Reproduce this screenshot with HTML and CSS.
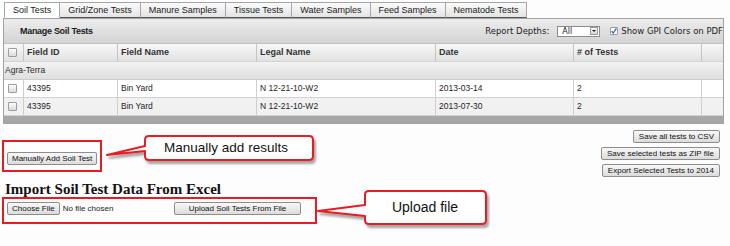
FILE: index.html
```html
<!DOCTYPE html>
<html>
	<head>
		<meta charset="UTF-8">
		<title>Manage Soil Tests</title>
		<link rel="stylesheet" href="styles.css">
	</head>
	<body>
		<ul class="tabs">
			<li class="tab on">Soil Tests</li>
			<li class="tab">Grid/Zone Tests</li>
			<li class="tab">Manure Samples</li>
			<li class="tab">Tissue Tests</li>
			<li class="tab">Water Samples</li>
			<li class="tab">Feed Samples</li>
			<li class="tab">Nematode Tests</li>
		</ul>
		<div class="panel">
			<div class="panel-head">
				<span class="panel-title">Manage Soil Tests</span>
				<div class="head-tools">
					<span class="depth-label">Report Depths:</span>
					<span class="select"><span class="select-val">All</span><i class="select-arrow"></i></span>
					<span class="chk chk-gpi"><svg width="6" height="6" viewBox="0 0 6 6"><polyline points="0.6,3.2 2.2,5 5.4,0.4" fill="none" stroke="#2d5fb3" stroke-width="1.2"/></svg></span>
					<span class="gpi">Show GPI Colors on PDF</span>
				</div>
			</div>
			<div class="grid">
				<div class="row row-head">
					<div class="cell"><span class="chk"></span></div>
					<div class="cell">Field ID</div>
					<div class="cell">Field Name</div>
					<div class="cell">Legal Name</div>
					<div class="cell">Date</div>
					<div class="cell"># of Tests</div>
					<div class="cell"></div>
				</div>
				<div class="row-group">Agra-Terra</div>
				<div class="row">
					<div class="cell"><span class="chk"></span></div>
					<div class="cell">43395</div>
					<div class="cell">Bin Yard</div>
					<div class="cell">N 12-21-10-W2</div>
					<div class="cell">2013-03-14</div>
					<div class="cell">2</div>
					<div class="cell"></div>
				</div>
				<div class="row row-alt">
					<div class="cell"><span class="chk"></span></div>
					<div class="cell">43395</div>
					<div class="cell">Bin Yard</div>
					<div class="cell">N 12-21-10-W2</div>
					<div class="cell">2013-07-30</div>
					<div class="cell">2</div>
					<div class="cell"></div>
				</div>
			</div>
			<div class="panel-foot"></div>
		</div>
		<div class="actions">
			<div class="mark mark-add">
				<button class="btn btn-add">Manually Add Soil Test</button>
			</div>
			<div class="exports">
				<button class="btn">Save all tests to CSV</button>
				<button class="btn">Save selected tests as ZIP file</button>
				<button class="btn">Export Selected Tests to 2014</button>
			</div>
		</div>
		<h2 class="import-title">Import Soil Test Data From Excel</h2>
		<div class="mark mark-upload">
			<button class="btn btn-file">Choose File</button>
			<span class="no-file">No file chosen</span>
			<button class="btn btn-upload">Upload Soil Tests From File</button>
		</div>
		<!-- callouts drawn over the screenshot -->
		<svg class="notes" width="730" height="246" viewBox="0 0 730 246">
			<defs>
				<filter id="shadow" x="-20%" y="-30%" width="140%" height="170%">
					<feDropShadow dx="2" dy="3" stdDeviation="1.2" flood-color="#000" flood-opacity=".35"/>
				</filter>
			</defs>
			<path class="note" filter="url(#shadow)" d="M149 136H309Q313 136 313 140V156Q313 160 309 160H149Q145 160 145 156V151L107 155L145 146V140Q145 136 149 136Z"/>
			<text class="note-text" x="226" y="152">Manually add results</text>
			<path class="note" filter="url(#shadow)" d="M369 191H482Q486 191 486 195V220Q486 224 482 224H369Q365 224 365 220V216L318 211L365 205V195Q365 191 369 191Z"/>
			<text class="note-text note-big" x="425" y="212">Upload file</text>
		</svg>
	</body>
</html>
```

FILE: styles.css
```css
*{margin:0;padding:0}
ul,li{list-style:none;}
body{position:relative;width:730px;height:246px;overflow:hidden;background:#fdfdfd;font-family:"Liberation Sans",Arial,sans-serif;color:#222;}

.tabs{display:flex;height:16px;padding:2px 0 0 4px;}
.tab{font-size:9px;line-height:14px;padding:0 8px;border:1px solid #a6a6a6;border-left:none;border-bottom-color:#555;background:linear-gradient(#fbfbfb,#e4e4e4);color:#1a1a1a;}
.tab:first-child{border-left:1px solid #a6a6a6;}
.tab.on{background:#fff;border-bottom-color:#fff;}

.panel{margin-left:3px;width:719px;border:1px solid #a3a3a3;}
.panel-head{display:flex;align-items:center;justify-content:space-between;height:25px;box-sizing:border-box;padding-left:16px;background:linear-gradient(#ededed,#d3d3d3);border-bottom:1px solid #c2c2c2;}
.panel-title{font-size:9px;font-weight:bold;letter-spacing:-.3px;color:#1a1a1a;}
.head-tools{display:flex;align-items:center;font-family:"DejaVu Sans",Verdana,sans-serif;font-size:8.5px;color:#222;}
.depth-label{margin-right:8px;}
.select{display:flex;align-items:center;width:43px;height:11px;box-sizing:border-box;border:1px solid #8c8c8c;background:#fff;}
.select-val{flex:1;padding-left:4px;font-size:8px;line-height:9px;}
.select-arrow{display:flex;align-items:center;justify-content:center;width:8px;height:8px;margin-right:1px;box-sizing:border-box;border:1px solid #9a9a9a;background:linear-gradient(#f6f6f6,#d6d6d6);}
.select-arrow::after{content:"";border-left:2px solid transparent;border-right:2px solid transparent;border-top:2px solid #222;}

.chk{display:inline-block;width:9px;height:9px;box-sizing:border-box;border:1px solid #9c9c9c;border-radius:1px;background:linear-gradient(#fdfdfd,#dadada);}
.chk-gpi{display:flex;align-items:center;justify-content:center;width:8px;height:8px;margin:0 3px 0 10px;background:#fff;}

.row{display:grid;grid-template-columns:19px 94px 139px 179px 138px 128px 22px;height:18px;box-sizing:border-box;border-bottom:1px solid #d2d2d2;background:#fff;}
.row-alt{background:#f1f1f1;}
.cell{border-left:1px solid #cfcfcf;padding-left:3px;font-size:8.5px;line-height:17px;white-space:nowrap;overflow:hidden;color:#1e1e1e;}
.cell:first-child{display:flex;align-items:center;border-left:none;padding-left:4px;}
.row-head{background:linear-gradient(#f8f8f8,#e2e2e2);}
.row-head .cell{font-size:9px;font-weight:bold;color:#333;border-left-color:#c4c4c4;}
.row-group{height:18px;box-sizing:border-box;padding-left:1px;font-size:8.5px;line-height:17px;color:#2a2a2a;background:linear-gradient(#f3f3f3,#dfdfdf);border-bottom:1px solid #cdcdcd;}
.panel-foot{height:7px;background:#a7a7a7;}

.btn{display:inline-block;height:13px;box-sizing:border-box;padding:0 5px;border:1px solid #8d8d8d;border-radius:2px;background:linear-gradient(#f8f8f8,#dcdcdc);font:8px/11px "Liberation Sans",Arial,sans-serif;color:#111;white-space:nowrap;}
.btn-add{padding:0 4px;}
.btn-file{padding:0 4px;}

.actions{display:flex;justify-content:space-between;align-items:flex-start;padding:6px 10px 0 2px;}
.mark{border:2px solid #e81b23;}
.mark-add{margin-top:10px;padding:5px 3px;}
.exports{display:flex;flex-direction:column;align-items:flex-end;gap:4px;}

.import-title{margin:4px 0 0 5px;font:bold 15px/16px "Liberation Serif","Times New Roman",serif;color:#111;}
.mark-upload{display:flex;align-items:center;width:315px;box-sizing:border-box;margin-left:2px;padding:3px 14px 7px 3px;}
.no-file{margin-left:3px;font-size:8px;color:#222;}
.btn-upload{width:127px;margin-left:auto;}

.notes{position:absolute;left:0;top:0;pointer-events:none;}
.note{fill:#fff;stroke:#e81b23;stroke-width:2;stroke-linejoin:round;}
.note-text{font:13.5px "Liberation Sans",Arial,sans-serif;fill:#111;text-anchor:middle;}
.note-big{font-size:14px;}
```
